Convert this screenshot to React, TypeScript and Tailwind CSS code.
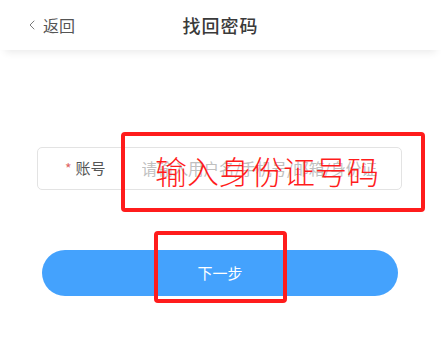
import { ChevronLeft } from "lucide-react";

export default function App() {
  return (
    <div className="relative w-[441px] h-[355px] bg-white overflow-hidden font-['Noto_Sans_CJK_SC',sans-serif]">
      <header className="h-[50px] grid grid-cols-[1fr_auto_1fr] items-center bg-white shadow-[0_7px_8px_-5px_rgba(0,0,0,0.09)]">
        <button className="flex items-center gap-[3px] pl-[24px] text-[16px] text-[#555]">
          <ChevronLeft size={16} strokeWidth={1.3} className="text-[#666]" />
          <span>返回</span>
        </button>
        <h1 className="text-[18px] font-medium text-[#3a3a3a] tracking-[1px]">找回密码</h1>
        <div />
      </header>

      <div className="mt-[97px] ml-[37px] w-[365px] h-[43px] border border-[#e3e3e3] rounded-[5px] flex items-center overflow-hidden">
        <span className="pl-[27px] text-[#e06464] text-[14px] mr-[4px]">*</span>
        <span className="text-[15px] text-[#555] w-[36px] shrink-0">账号</span>
        <input
          placeholder="请输入用户名/手机号/邮箱/身份证"
          className="ml-[30px] flex-1 min-w-0 pr-[10px] text-[15.5px] text-[#333] placeholder:text-[#c0c0c0] outline-none bg-transparent"
        />
      </div>

      <button className="mt-[60px] ml-[42px] w-[356px] h-[46px] rounded-full bg-[#44a2fd] text-white text-[15px] flex items-center justify-center">
        下一步
      </button>

      {/* annotation overlays */}
      <div className="absolute left-[121px] top-[132px] w-[304px] h-[80px] border-[4px] border-[#ff1c1c] rounded-[4px] flex items-center pl-[30px] pb-[4px]">
        <span className="text-[32px] font-light text-[#ff1c1c] leading-none">输入身份证号码</span>
      </div>
      <div className="absolute left-[154px] top-[231px] w-[133px] h-[72px] border-[4px] border-[#ff1c1c] rounded-[4px]" />
    </div>
  );
}
